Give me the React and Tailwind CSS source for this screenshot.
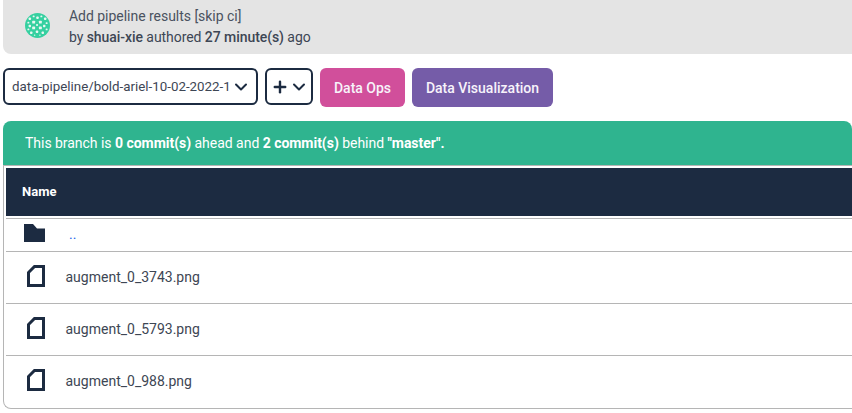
import React from 'react';
import { ChevronDown, Plus } from 'lucide-react';

const files = ['augment_0_3743.png', 'augment_0_5793.png', 'augment_0_988.png'];

// speckled round avatar, white gaps on green
const specks = [
  [5, 6, 2.5], [9, 3.5, 2], [13, 5, 2.5], [17, 3.5, 2], [21, 6, 2.5],
  [3.5, 10, 2], [9, 9.5, 3], [16, 9.5, 3], [22.5, 10.5, 2],
  [5, 13.5, 2.5], [12.5, 12.5, 2], [20, 13.5, 2.5],
  [9, 15.5, 3], [16, 15.5, 3], [3.5, 17, 2], [22.5, 17, 2],
  [6.5, 20.5, 2.5], [12.5, 19.5, 2.5], [18.5, 20.5, 2.5], [10, 23, 1.5], [15.5, 23, 1.5],
];

const Logo = () => (
  <svg width="25" height="25" viewBox="0 0 26 26" className="mb-[3px] shrink-0">
    <circle cx="13" cy="13" r="13" fill="#35d0a0" />
    {specks.map(([x, y, s], i) => (
      <rect key={i} x={x - s / 2} y={y - s / 2} width={s} height={s} rx="0.7" fill="#e9f7f2" />
    ))}
  </svg>
);

const FileIcon = () => (
  <svg width="18" height="22" viewBox="0 0 18 22" className="mb-[2px] shrink-0">
    <path d="M7.5 1.5H16.5V20.5H1.5V7.5Z" fill="none" stroke="#1c2b41" strokeWidth="3" />
  </svg>
);

const FolderIcon = () => (
  <svg width="21" height="18" viewBox="0 0 21 18" className="mb-[2px] shrink-0">
    <path d="M0 0H9L13 4.5H21V18H0Z" fill="#1c2b41" />
  </svg>
);

export default function App() {
  return (
    <div className="h-[413px] w-[852px] overflow-hidden bg-white pl-[3px] font-['Roboto',sans-serif] text-sm text-[#3d4654]">
      <div className="flex h-[54px] items-center rounded-bl-lg bg-[#e4e4e4] pl-[22px]">
        <Logo />
        <div className="ml-[19px] leading-[21px]">
          <p className="tracking-[-0.03px] text-[#4a5260]">Add pipeline results [skip ci]</p>
          <p className="tracking-[-0.06px]">
            by <b className="font-medium">shuai-xie</b> authored <b className="font-medium">27 minute(s)</b> ago
          </p>
        </div>
      </div>

      <div className="mt-[14px] flex items-start gap-[7px]">
        <div className="flex h-[37px] w-[255px] items-center rounded-md border-2 border-[#1c2b41] pl-[7px] text-[13.33px] text-[#3d4654]">
          <span className="w-[218px] shrink-0 overflow-hidden whitespace-nowrap">data-pipeline/bold-ariel-10-02-2022-1</span>
          <ChevronDown size={20} strokeWidth={2.4} color="#1c2b41" className="ml-[1px] shrink-0" />
        </div>
        <div className="flex h-[37px] w-[48px] items-center rounded-md border-2 border-[#1c2b41] pl-[3.5px]">
          <Plus size={18} strokeWidth={3.2} color="#1c2b41" className="shrink-0" />
          <ChevronDown size={20} strokeWidth={2.4} color="#1c2b41" className="shrink-0" />
        </div>
        <button className="h-[39px] w-[85px] rounded-md bg-[#d14f9b] font-medium text-[#f7f3fa]">Data Ops</button>
        <button className="h-[39px] w-[141px] rounded-md bg-[#755ca8] font-medium text-[#f7f3fa]">Data Visualization</button>
      </div>

      <div className="mt-[14px] flex h-[44px] items-center rounded-t-lg bg-[#2fb48f] pl-[22px] text-white">
        <p className="tracking-[-0.03px]">
          This branch is <b className="font-bold">0 commit(s)</b> ahead and <b className="font-bold">2 commit(s)</b> behind <b className="font-bold">"master".</b>
        </p>
      </div>

      <div className="flex h-[244px] flex-col rounded-bl-lg border-y border-l border-[#b5b5b5] pl-[2px] pt-[2px]">
        <div className="flex h-[48px] shrink-0 items-center bg-[#1c2b41] pl-[16px] text-[13px] font-bold text-white">Name</div>
        <div className="mt-[2px] flex h-[33px] shrink-0 items-center border-t border-[#b5b5b5] pb-[2px] pl-[18px]">
          <FolderIcon />
          <span className="ml-[24px] text-[#2563eb]">..</span>
        </div>
        {files.map((name) => (
          <div key={name} className="flex h-[52px] shrink-0 items-center border-t border-[#b5b5b5] pb-[2px] pl-[21px]">
            <FileIcon />
            <span className="ml-[20.5px]">{name}</span>
          </div>
        ))}
      </div>
    </div>
  );
}
